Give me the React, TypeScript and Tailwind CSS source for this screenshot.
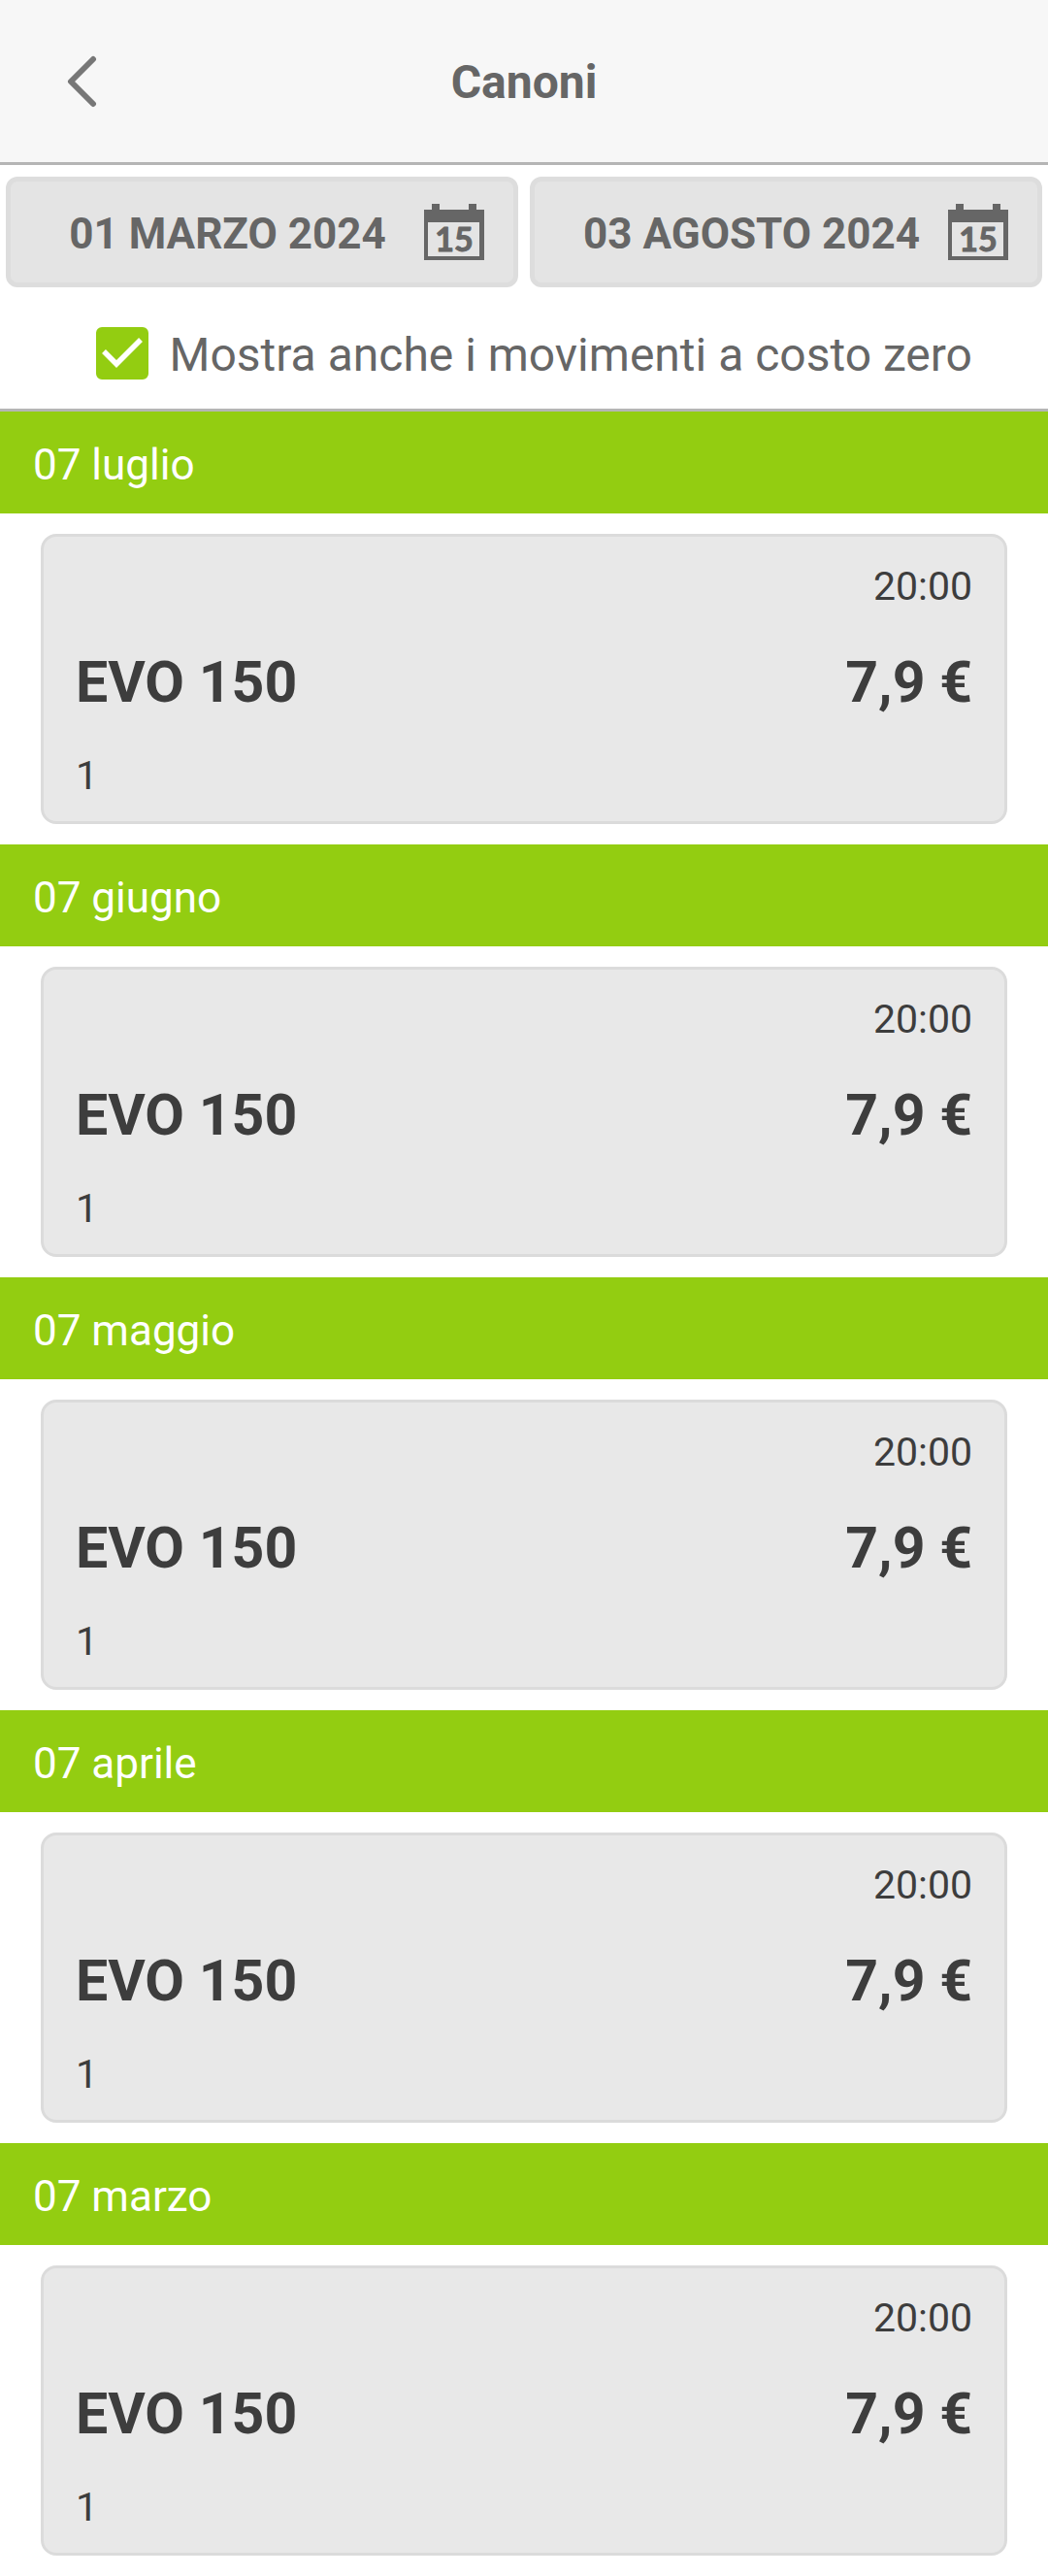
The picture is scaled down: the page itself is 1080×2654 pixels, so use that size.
import { useState } from "react";

const movements = [
  { date: "07 luglio", time: "20:00", name: "EVO 150", price: "7,9 €", quantity: 1 },
  { date: "07 giugno", time: "20:00", name: "EVO 150", price: "7,9 €", quantity: 1 },
  { date: "07 maggio", time: "20:00", name: "EVO 150", price: "7,9 €", quantity: 1 },
  { date: "07 aprile", time: "20:00", name: "EVO 150", price: "7,9 €", quantity: 1 },
  { date: "07 marzo", time: "20:00", name: "EVO 150", price: "7,9 €", quantity: 1 },
];

function CalendarIcon() {
  return (
    <svg className="h-[58px] w-[62px] shrink-0" viewBox="0 0 62 58" aria-hidden="true">
      <path
        fill="#666666"
        fillRule="evenodd"
        d="M8 0h8v6h30V0h8v6h8v52H0V6h8zM4 19v35h53V19z"
      />
      <text
        x="31"
        y="49"
        textAnchor="middle"
        fill="#666666"
        stroke="#666666"
        strokeWidth="1"
        strokeLinejoin="round"
        className="font-[Lato,sans-serif] text-[34px] font-bold"
      >
        15
      </text>
    </svg>
  );
}

function DateButton({ label }: { label: string }) {
  return (
    <button
      type="button"
      className="flex h-[114px] flex-1 items-center rounded-xl border-[5px] border-[#dddddd] bg-[#e4e4e4] pr-[30px] pl-[27px]"
    >
      <span className="flex-1 pt-1 text-center text-[44px] leading-[52px] font-bold whitespace-nowrap">{label}</span>
      <span className="ml-1.5">
        <CalendarIcon />
      </span>
    </button>
  );
}

export default function App() {
  const [showFree, setShowFree] = useState(true);

  return (
    <div className="min-h-screen bg-white font-[Roboto,sans-serif] text-[#666666]">
      <header className="grid h-[170px] grid-cols-[170px_1fr_170px] items-center border-b-[3px] border-[#b5b5b5] bg-[#f7f7f7]">
        <button type="button" aria-label="Indietro" className="flex h-full items-center justify-center">
          <svg className="h-14 w-8" viewBox="0 0 32 56" fill="none" aria-hidden="true">
            <path
              d="M27 5L4 28L27 51"
              stroke="#777777"
              strokeWidth="6"
              strokeLinecap="round"
              strokeLinejoin="round"
            />
          </svg>
        </button>
        <h1 className="pt-0.5 text-center text-[48px] leading-[56px] font-bold">Canoni</h1>
      </header>

      <div className="flex gap-3 px-1.5 pt-3">
        <DateButton label="01 MARZO 2024" />
        <DateButton label="03 AGOSTO 2024" />
      </div>

      <label className="flex h-32 items-center justify-end gap-[22px] border-b-[3px] border-[#b5b5b5] pt-[11px] pr-[78px]">
        <span className="grid">
          <input
            type="checkbox"
            checked={showFree}
            onChange={(e) => setShowFree(e.target.checked)}
            className="peer col-start-1 row-start-1 h-[54px] w-[54px] appearance-none rounded-md border-4 border-[#93cd11] checked:bg-[#93cd11]"
          />
          <svg
            className="pointer-events-none invisible col-start-1 row-start-1 h-[54px] w-[54px] peer-checked:visible"
            viewBox="0 0 54 54"
            fill="none"
            aria-hidden="true"
          >
            <path d="M8 25L21 38L46 13" stroke="#ffffff" strokeWidth="5.500" />
          </svg>
        </span>
        <span className="pt-1 text-[48px] leading-[56px] whitespace-nowrap">Mostra anche i movimenti a costo zero</span>
      </label>

      <main>
        {movements.map((m) => (
          <section key={m.date}>
            <h2 className="bg-[#93cd11] px-[34px] pt-[29px] pb-6 text-[44px] leading-[52px] text-white">{m.date}</h2>
            <div className="px-[42px] py-[21px]">
              <article className="rounded-2xl border-[3px] border-[#dbdbdb] bg-[#e8e8e8] px-[33px] pt-[27px] pb-[23px] text-[#3d3d3d]">
                <p className="text-right text-[41px] leading-[48px]">{m.time}</p>
                <div className="flex items-center justify-between pt-[39px] pb-9 text-[59px] leading-[72px] font-bold">
                  <h3>{m.name}</h3>
                  <p>{m.price}</p>
                </div>
                <p className="text-[41px] leading-[48px]">{m.quantity}</p>
              </article>
            </div>
          </section>
        ))}
      </main>
    </div>
  );
}
